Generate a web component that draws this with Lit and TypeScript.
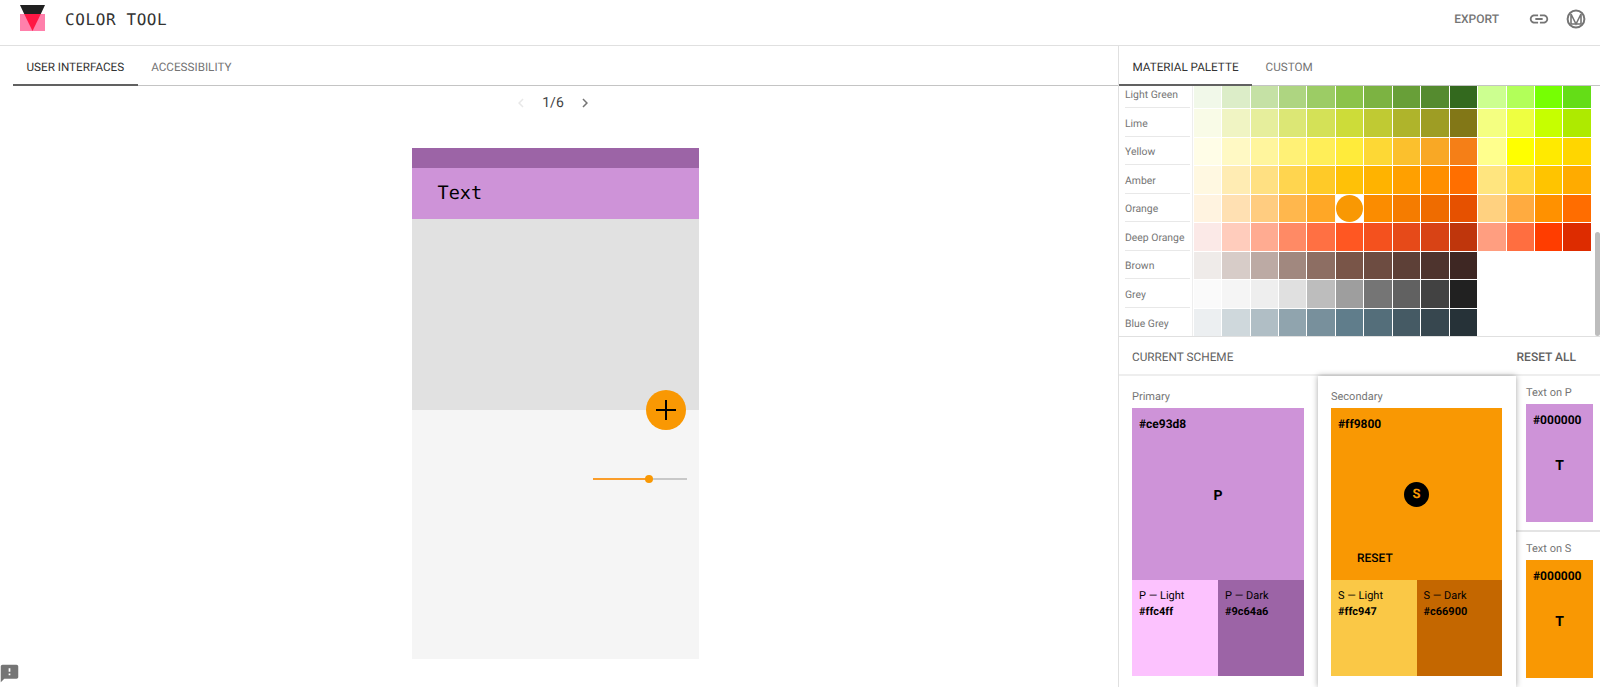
import { LitElement, html, css, svg } from "lit";
import { customElement } from "lit/decorators.js";

const ROWS: [string, string[]][] = [
  ["Light Green", "f1f8e9 dcedc8 c5e1a5 aed581 9ccc65 8bc34a 7cb342 689f38 558b2f 33691e ccff90 b2ff59 76ff03 64dd17".split(" ")],
  ["Lime", "f9fbe7 f0f4c3 e6ee9c dce775 d4e157 cddc39 c0ca33 afb42b 9e9d24 827717 f4ff81 eeff41 c6ff00 aeea00".split(" ")],
  ["Yellow", "fffde7 fff9c4 fff59d fff176 ffee58 ffeb3b fdd835 fbc02d f9a825 f57f17 ffff8d ffff00 ffea00 ffd600".split(" ")],
  ["Amber", "fff8e1 ffecb3 ffe082 ffd54f ffca28 ffc107 ffb300 ffa000 ff8f00 ff6f00 ffe57f ffd740 ffc400 ffab00".split(" ")],
  ["Orange", "fff3e0 ffe0b2 ffcc80 ffb74d ffa726 ff9800 fb8c00 f57c00 ef6c00 e65100 ffd180 ffab40 ff9100 ff6d00".split(" ")],
  ["Deep Orange", "fbe9e7 ffccbc ffab91 ff8a65 ff7043 ff5722 f4511e e64a19 d84315 bf360c ff9e80 ff6e40 ff3d00 dd2c00".split(" ")],
  ["Brown", "efebe9 d7ccc8 bcaaa4 a1887f 8d6e63 795548 6d4c41 5d4037 4e342e 3e2723".split(" ")],
  ["Grey", "fafafa f5f5f5 eeeeee e0e0e0 bdbdbd 9e9e9e 757575 616161 424242 212121".split(" ")],
  ["Blue Grey", "eceff1 cfd8dc b0bec5 90a4ae 78909c 607d8b 546e7a 455a64 37474f 263238".split(" ")],
];

const SHOWN: Record<string, string> = {
  "#ff9800": "#f99803",
  "#ffc947": "#fac846",
  "#ffc4ff": "#fcc2fe",
  "#c66900": "#c46700",
};
const shown = (hex: string) => SHOWN[hex] ?? hex;

const icon = (d: string, size = 24) =>
  html`<svg width=${size} height=${size} viewBox="0 0 24 24" fill="currentColor">${svg`<path d=${d}></path>`}</svg>`;

@customElement("app-root")
export class AppRoot extends LitElement {
  static styles = css`
    :host { display: block; height: 687px; overflow: hidden; background: #fff; color: #212121; font-family: Roboto, "Liberation Sans", sans-serif; position: relative; text-rendering: geometricPrecision; }
    * { box-sizing: border-box; }
    .top { height: 46px; border-bottom: 1px solid #e0e0e0; display: flex; align-items: center; padding: 0 14px 9px 20px; }
    .logo { display: block; }
    .title { font-family: "DejaVu Sans Mono", monospace; font-size: 16px; letter-spacing: 0.6px; margin-left: 20px; color: #333; white-space: pre; margin-top: 2px; }
    .spacer { flex: 1; }
    .export { font-size: 12px; font-weight: 500; color: #757575; margin-top: 2px; }
    .link { color: #757575; margin-left: 29px; display: flex; margin-top: 2px; }
    .mat { margin-left: 16px; display: flex; margin-top: 2px; }
    .body { display: flex; height: 641px; }
    .left { width: 1118px; flex: none; display: flex; flex-direction: column; position: relative; }
    .tabs { display: flex; height: 40px; flex: none; }
    .ltabs { border-bottom: 1px solid #c4c4c4; margin-left: 13px; }
    .tab { font-size: 11.7px; font-weight: 400; display: flex; align-items: center; padding: 2px 13.5px 0; color: #757575; }
    .tab.on { color: #333; box-shadow: inset 0 -1px 0 #616161; border-bottom: 1px solid #616161; margin-bottom: -1px; }
    .pager { display: flex; height: 34px; flex: none; align-items: center; justify-content: center; gap: 12px; font-size: 14px; color: #424242; margin-left: -12px; }
    .pager svg { display: block; }
    .chev-off { color: #e8e8e8; }
    .chev-on { color: #757575; }
    .stage { display: flex; justify-content: center; padding-top: 28px; margin-left: -7px; }
    .phone { width: 287px; height: 511px; position: relative; display: flex; flex-direction: column; background: #f5f5f5; }
    .status { height: 20px; background: #9c64a6; flex: none; }
    .appbar { height: 51px; background: #ce93d8; flex: none; display: flex; align-items: center; padding-left: 25.5px; font-family: "DejaVu Sans Mono", monospace; font-size: 18.5px; color: #000; }
    .hero { height: 191px; background: #e1e1e1; flex: none; }
    .lower { flex: 1; padding: 68px 12.5px 0 0; display: flex; justify-content: flex-end; }
    .slider { width: 94px; height: 2px; background: #c8c8c8; position: relative; }
    .slider i { position: absolute; left: 0; top: 0; bottom: 0; width: 56px; background: #fa9d2a; }
    .slider b { position: absolute; left: 52px; top: -3px; width: 8px; height: 8px; border-radius: 50%; background: #f99803; }
    .fab { position: absolute; left: 234px; top: 242px; width: 40px; height: 40px; border-radius: 50%; background: #f99803; display: flex; align-items: center; justify-content: center; color: #000; }
    .feedback { position: absolute; left: -1px; bottom: 3px; color: #757575; display: flex; }
    .right { width: 482px; flex: none; border-left: 1px solid #e0e0e0; display: flex; flex-direction: column; position: relative; overflow: hidden; }
    .rtabs { border-bottom: 1px solid #c4c4c4; }
    .palette { height: 251px; flex: none; overflow: hidden; display: flex; flex-direction: column; justify-content: flex-end; border-bottom: 1px solid #e0e0e0; }
    .prow { display: flex; height: 28.5px; flex: none; }
    .prow:last-child .pname { border-bottom: 0; }
    .pname { width: 65px; margin-left: 6px; flex: none; font-size: 10.4px; color: #757575; border-bottom: 1px solid #e8e8e8; padding-top: 3px; display: flex; align-items: center; }
    .cells { margin-left: 1.5px; padding-left: 1.2px; padding-top: 1px; border-left: 1px solid #eee; display: grid; grid-template-columns: repeat(14, 27.45px); column-gap: 1px; }
    .cell { height: 27.5px; }
    .cell.sel { display: flex; }
    .cell.sel::before { content: ""; flex: 1; border-radius: 50%; background: #f99803; }
    .thumb { position: absolute; right: 0; top: 186px; width: 5px; height: 104px; background: #bdbdbd; border-radius: 3px; }
    .schemehead { height: 39px; flex: none; display: flex; align-items: center; justify-content: space-between; padding: 2px 24px 0 13px; border-bottom: 2px solid #eee; font-size: 11.8px; color: #616161; }
    .schemehead b { font-weight: 500; font-size: 12px; }
    .schemes { flex: 1; display: flex; min-height: 0; }
    .card { width: 199px; flex: none; padding: 14px 14px 0 13px; background: #fff; }
    .card.sec { box-shadow: 0 0 6px rgba(0,0,0,.35); position: relative; width: 198px; margin: 0; }
    .lab { font-size: 11px; color: #757575; height: 18px; line-height: 13px; }
    .main { height: 172px; position: relative; padding: 9px 7px; font-size: 12px; line-height: 14px; font-weight: 700; color: #000; }
    .subs { display: flex; height: 96px; }
    .sub { flex: 1; padding: 8px 7px; font-size: 11px; color: #000; line-height: 16px; }
    .sub strong { display: block; font-weight: 700; }
    .mid { position: absolute; left: 0; right: 0; top: 79px; text-align: center; font-size: 14px; line-height: 18px; font-weight: 700; }
    .sbadge { position: absolute; left: 73px; top: 74px; width: 25px; height: 25px; border-radius: 50%; background: #000; color: #f99803; display: flex; align-items: center; justify-content: center; font-size: 13px; font-weight: 700; }
    .reset { position: absolute; left: 26px; bottom: 15px; font-size: 12px; font-weight: 500; }
    .textcol { flex: 1; display: flex; flex-direction: column; min-width: 0; }
    .tcard { padding: 10px 0 0 10px; height: 157px; border-bottom: 2px solid #e4e4e4; }
    .tcard:last-child { border-bottom: 0; }
    .tbox { width: 67px; height: 118px; position: relative; padding: 9px 7px; font-size: 12px; line-height: 14px; font-weight: 700; color: #000; }
    .tbox .mid { top: 53px; }
  `;

  private swatch(name: string, hex: string, letter: string, lname: string, lhex: string, dname: string, dhex: string, extra: unknown) {
    return html`
      <div class="lab">${name}</div>
      <div class="main" style="background:${shown(hex)}">${hex}${extra ? extra : html`<div class="mid">${letter}</div>`}</div>
      <div class="subs">
        <div class="sub" style="background:${shown(lhex)}">${lname}<strong>${lhex}</strong></div>
        <div class="sub" style="background:${shown(dhex)}">${dname}<strong>${dhex}</strong></div>
      </div>`;
  }

  render() {
    return html`
      <div class="top">
        <svg class="logo" width="25" height="26" viewBox="0 0 25 26">
          <rect x="0" y="9" width="25" height="17" fill="#ff80ab"></rect>
          <polygon points="4.2,9 20.8,9 12.5,26" fill="#ff1744"></polygon>
          <polygon points="0,0 25,0 20.8,9 4.2,9" fill="#212121"></polygon>
        </svg>
        <div class="title">COLOR TOOL</div>
        <div class="spacer"></div>
        <div class="export">EXPORT</div>
        <div class="link">${icon("M3.9 12c0-1.71 1.39-3.1 3.1-3.1h4V7H7c-2.76 0-5 2.24-5 5s2.24 5 5 5h4v-1.9H7c-1.71 0-3.1-1.39-3.1-3.1zM8 13h8v-2H8v2zm9-6h-4v1.9h4c1.71 0 3.1 1.39 3.1 3.1s-1.39 3.1-3.1 3.1h-4V17h4c2.76 0 5-2.24 5-5s-2.24-5-5-5z", 22)}</div>
        <div class="mat">
          <svg width="20" height="20" viewBox="0 0 20 20" fill="none" stroke="#757575" stroke-width="2">
            <circle cx="10" cy="10" r="8.4"></circle>
            <path d="M5 5 V15 H15 V5 M5 5 L10 15 L15 5" stroke-width="1.6" fill="none"></path>
          </svg>
        </div>
      </div>
      <div class="body">
        <div class="left">
          <div class="tabs ltabs">
            <div class="tab on">USER INTERFACES</div>
            <div class="tab">ACCESSIBILITY</div>
          </div>
          <div class="pager">
            <span class="chev-off">${icon("M15.4 7.4 14 6l-6 6 6 6 1.4-1.4L10.8 12z", 18)}</span>
            <span>1/6</span>
            <span class="chev-on">${icon("M8.6 16.6 10 18l6-6-6-6-1.4 1.4L13.2 12z", 18)}</span>
          </div>
          <div class="stage">
            <div class="phone">
              <div class="status"></div>
              <div class="appbar">Text</div>
              <div class="hero"></div>
              <div class="lower"><div class="slider"><i></i><b></b></div></div>
              <div class="fab">${icon("M2 11h9V2h2v9h9v2h-9v9h-2v-9H2z", 24)}</div>
            </div>
          </div>
          <div class="feedback">${icon("M20 2H4c-1.1 0-1.99.9-1.99 2L2 22l4-4h14c1.1 0 2-.9 2-2V4c0-1.1-.9-2-2-2zm-7 12h-2v-2h2v2zm0-4h-2V6h2v4z", 21)}</div>
        </div>
        <div class="right">
          <div class="tabs rtabs">
            <div class="tab on">MATERIAL PALETTE</div>
            <div class="tab">CUSTOM</div>
          </div>
          <div class="palette">
            ${ROWS.map(([name, cells]) => html`
              <div class="prow">
                <div class="pname">${name}</div>
                <div class="cells">
                  ${cells.map((c, i) => name === "Orange" && i === 5
                    ? html`<div class="cell sel"></div>`
                    : html`<div class="cell" style="background:#${c}"></div>`)}
                </div>
              </div>`)}
          </div>
          <div class="thumb"></div>
          <div class="schemehead"><span>CURRENT SCHEME</span><b>RESET ALL</b></div>
          <div class="schemes">
            <div class="card">
              ${this.swatch("Primary", "#ce93d8", "P", "P — Light", "#ffc4ff", "P — Dark", "#9c64a6", null)}
            </div>
            <div class="card sec">
              ${this.swatch("Secondary", "#ff9800", "S", "S — Light", "#ffc947", "S — Dark", "#c66900",
                html`<div class="sbadge">S</div><div class="reset">RESET</div>`)}
            </div>
            <div class="textcol">
              <div class="tcard">
                <div class="lab">Text on P</div>
                <div class="tbox" style="background:#ce93d8">#000000<div class="mid">T</div></div>
              </div>
              <div class="tcard">
                <div class="lab">Text on S</div>
                <div class="tbox" style="background:#f99803">#000000<div class="mid">T</div></div>
              </div>
            </div>
          </div>
        </div>
      </div>
    `;
  }
}
